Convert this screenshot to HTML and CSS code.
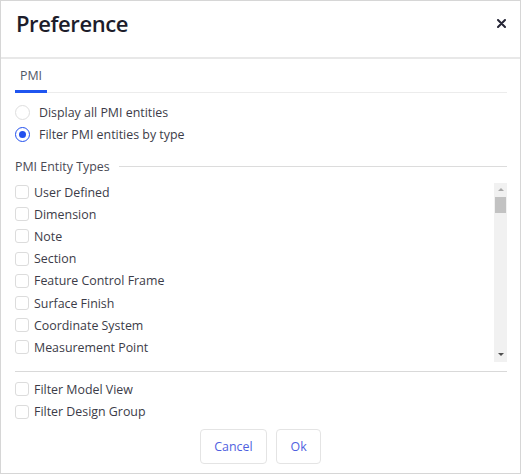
FILE: index.html
```html
<!DOCTYPE html>
<html>
<head>
<meta charset="utf-8">
<link rel="stylesheet" href="styles.css">
</head>
<body>
<div class="dialog">
  <div class="header">
    <h1 class="title">Preference</h1>
    <button class="close" aria-label="Close">
      <svg width="9" height="9" viewBox="0 0 9 9"><path d="M1 1L8 8M8 1L1 8" stroke="#262636" stroke-width="2" stroke-linecap="round"/></svg>
    </button>
  </div>
  <div class="content">
    <div class="tabbar"><div class="tab">PMI</div></div>
    <div class="radios">
      <label class="row"><span class="radio"></span>Display all PMI entities</label>
      <label class="row"><span class="radio checked"></span>Filter PMI entities by type</label>
    </div>
    <div class="section"><span class="section-title">PMI Entity Types</span><span class="section-line"></span></div>
    <div class="listwrap">
      <div class="list">
        <label class="row crow"><span class="check"></span>User Defined</label>
        <label class="row crow"><span class="check"></span>Dimension</label>
        <label class="row crow"><span class="check"></span>Note</label>
        <label class="row crow"><span class="check"></span>Section</label>
        <label class="row crow"><span class="check"></span>Feature Control Frame</label>
        <label class="row crow"><span class="check"></span>Surface Finish</label>
        <label class="row crow"><span class="check"></span>Coordinate System</label>
        <label class="row crow"><span class="check"></span>Measurement Point</label>
      </div>
      <div class="scrollbar">
        <span class="arrow-up"></span>
        <span class="thumb"></span>
        <span class="spacer"></span>
        <span class="arrow-down"></span>
      </div>
    </div>
    <div class="sep"></div>
    <div class="filters">
      <label class="row frow"><span class="check"></span>Filter Model View</label>
      <label class="row frow"><span class="check"></span>Filter Design Group</label>
    </div>
    <div class="buttons">
      <button class="btn">Cancel</button>
      <button class="btn">Ok</button>
    </div>
  </div>
</div>
</body>
</html>
```

FILE: styles.css
```css
* { box-sizing: border-box; }
html, body { margin: 0; padding: 0; background: #fff; }
body { font-family: "Open Sans", "Noto Sans", sans-serif; color: #3c3c48; font-size: 12.4px; }

.dialog {
  width: 521px;
  height: 474px;
  border: 1px solid #d6d6d6;
  background: #fff;
}

.header {
  height: 58px;
  border-bottom: 2px solid #e8e8e8;
  padding: 6px 14px 0 15px;
  display: flex;
  justify-content: space-between;
  align-items: flex-start;
}
.title {
  margin: 0;
  font-size: 22px;
  letter-spacing: -0.4px;
  line-height: 33px;
  font-weight: 600;
  color: #1d1d2b;
}
.close {
  height: 33px;
  border: 0;
  background: none;
  padding: 0;
  display: flex;
  align-items: center;
  cursor: pointer;
}

.content { padding: 0 13px 0 14px; }

.tabbar {
  height: 34px;
  border-bottom: 1px solid #ececec;
  display: flex;
  align-items: flex-start;
}
.tab {
  height: 34px;
  padding: 3px 5px 0 5px;
  line-height: 28px;
  border-bottom: 3px solid #1f55f0;
  color: #505866;
  font-size: 12.4px;
}

.radios { margin-top: 8px; }
.row {
  display: flex;
  align-items: center;
  height: 22px;
  white-space: nowrap;
}
.radio {
  width: 15px;
  height: 15px;
  border: 1px solid #dedede;
  border-radius: 50%;
  margin-right: 9px;
  flex: none;
  display: flex;
  align-items: center;
  justify-content: center;
}
.radio.checked { border: 1.5px solid #2250ee; }
.radio.checked::after {
  content: "";
  width: 7px;
  height: 7px;
  border-radius: 50%;
  background: #2250ee;
}

.section {
  margin-top: 11px;
  height: 20px;
  display: flex;
  align-items: center;
}
.section-title { color: #4a4a55; margin-right: 9px; }
.section-line { flex: 1; height: 1px; background: #dcdcdc; }

.listwrap {
  margin-top: 5px;
  height: 181px;
  display: flex;
}
.list { flex: 1; }
.crow { height: 22.2px; }
.check {
  width: 14px;
  height: 14px;
  border: 1px solid #dcdcdc;
  border-radius: 3px;
  margin-right: 5px;
  flex: none;
}

.scrollbar {
  width: 13px;
  margin-top: 2px;
  height: 179px;
  background: #f1f1f1;
  display: flex;
  flex-direction: column;
  align-items: center;
}
.arrow-up {
  margin-top: 5px;
  width: 0; height: 0;
  border-left: 3px solid transparent;
  border-right: 3px solid transparent;
  border-bottom: 3px solid #a9a9a9;
}
.thumb {
  margin-top: 6px;
  width: 11px;
  height: 16px;
  background: #c2c2c2;
}
.spacer { flex: 1; }
.arrow-down {
  margin-bottom: 6px;
  width: 0; height: 0;
  border-left: 3.5px solid transparent;
  border-right: 3.5px solid transparent;
  border-top: 3.5px solid #505050;
}

.sep { margin-top: 9px; height: 1px; background: #d9d9d9; }

.filters { margin-top: 6px; }
.frow { height: 22.4px; }

.buttons {
  margin-top: 6px;
  display: flex;
  justify-content: center;
  gap: 9px;
  padding-right: 1px;
}
.btn {
  height: 35px;
  padding: 0 13.5px;
  background: #fff;
  border: 1px solid #e4e4e4;
  border-radius: 4px;
  font-family: "Open Sans", "Noto Sans", sans-serif;
  font-size: 12.4px;
  color: #4f5fe0;
  cursor: pointer;
}
```
